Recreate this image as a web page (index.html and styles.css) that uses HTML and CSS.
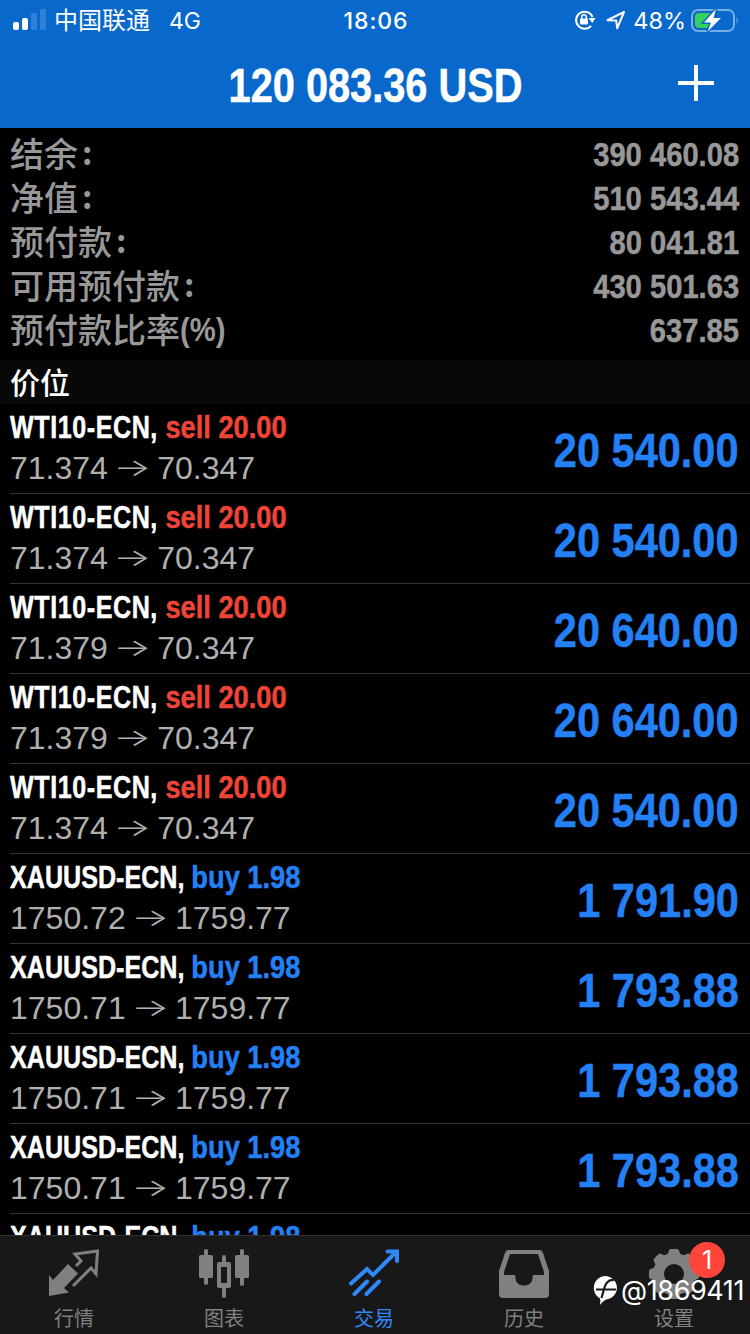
FILE: index.html
```html
<!DOCTYPE html>
<html lang="zh-CN">
<head>
    <meta charset="UTF-8">
    <meta name="viewport" content="width=device-width, initial-scale=1.0">
    <title>交易</title>
    <link rel="stylesheet" href="styles.css">
</head>
<body>

    <div class="app">
        <header class="header">
            <div class="status-bar">
                <div class="status-left">
                    <svg class="signal" width="34" height="22" viewBox="0 0 34 22">
                        <rect x="1" y="13" width="6" height="8" rx="2" fill="#fff"/>
                        <rect x="10" y="9" width="6" height="12" rx="2" fill="#fff"/>
                        <rect x="19" y="4" width="6" height="17" rx="1" fill="#2e80d8"/>
                        <rect x="28" y="0" width="6" height="21" rx="1" fill="#2e80d8"/>
                    </svg>
                    <span class="carrier">中国联通</span>
                    <span class="network">4G</span>
                </div>
                <div class="clock">18:06</div>
                <div class="status-right">
                    <svg class="lock" width="22" height="22" viewBox="0 0 22 22">
                        <path d="M18.5 8A8.5 8.5 0 1 0 17 16.8" fill="none" stroke="#fff" stroke-width="2"/>
                        <path d="M14.5 9h7l-3.2 5z" fill="#fff"/>
                        <rect x="6" y="9.5" width="8" height="6" rx="1" fill="#fff"/>
                        <path d="M7.7 10V8a2.3 2.3 0 0 1 4.6 0v2" fill="none" stroke="#fff" stroke-width="1.5"/>
                    </svg>
                    <svg class="location" width="20" height="20" viewBox="0 0 20 20">
                        <path d="M1.5 10.2L18 2 11.2 18.3 10.2 10.4z" fill="none" stroke="#fff" stroke-width="2" stroke-linejoin="round"/>
                    </svg>
                    <span class="percent">48%</span>
                    <svg class="battery" width="50" height="26" viewBox="0 0 50 26">
                        <rect x="2" y="3" width="42" height="21" rx="6" fill="none" stroke="#78ade2" stroke-width="2"/>
                        <path d="M46.5 10q2.5 3 0 7z" fill="#78ade2"/>
                        <path d="M9 6h11v15H9a4 4 0 0 1-4-4v-7a4 4 0 0 1 4-4z" fill="#35cf5c"/>
                        <path d="M26 2L14 15.5h7L17.5 24.5 31 11h-7.5z" fill="#fff" stroke="#0868cc" stroke-width="3" paint-order="stroke"/>
                    </svg>
                </div>
            </div>
            <div class="title-bar">
                <h1 class="title">120 083.36 USD</h1>
                <svg class="add" width="36" height="36" viewBox="0 0 36 36">
                    <path d="M18 0v36M0 18h36" stroke="#fff" stroke-width="4"/>
                </svg>
            </div>
        </header>

        <section class="summary">
            <div class="summary-row"><span class="label">结余<i>:</i></span><span class="value">390 460.08</span></div>
            <div class="summary-row"><span class="label">净值<i>:</i></span><span class="value">510 543.44</span></div>
            <div class="summary-row"><span class="label">预付款<i>:</i></span><span class="value">80 041.81</span></div>
            <div class="summary-row"><span class="label">可用预付款<i>:</i></span><span class="value">430 501.63</span></div>
            <div class="summary-row"><span class="label">预付款比率<b>(%)</b></span><span class="value">637.85</span></div>
        </section>

        <h2 class="section-title">价位</h2>

        <main class="positions">
            <div class="position">
                <div>
                    <div class="symbol wti">WTI10-ECN, <span class="sell">sell 20.00</span></div>
                    <div class="prices">71.374 <span class="arrow">→</span> 70.347</div>
                </div>
                <div class="profit">20 540.00</div>
            </div>
            <div class="position">
                <div>
                    <div class="symbol wti">WTI10-ECN, <span class="sell">sell 20.00</span></div>
                    <div class="prices">71.374 <span class="arrow">→</span> 70.347</div>
                </div>
                <div class="profit">20 540.00</div>
            </div>
            <div class="position">
                <div>
                    <div class="symbol wti">WTI10-ECN, <span class="sell">sell 20.00</span></div>
                    <div class="prices">71.379 <span class="arrow">→</span> 70.347</div>
                </div>
                <div class="profit">20 640.00</div>
            </div>
            <div class="position">
                <div>
                    <div class="symbol wti">WTI10-ECN, <span class="sell">sell 20.00</span></div>
                    <div class="prices">71.379 <span class="arrow">→</span> 70.347</div>
                </div>
                <div class="profit">20 640.00</div>
            </div>
            <div class="position">
                <div>
                    <div class="symbol wti">WTI10-ECN, <span class="sell">sell 20.00</span></div>
                    <div class="prices">71.374 <span class="arrow">→</span> 70.347</div>
                </div>
                <div class="profit">20 540.00</div>
            </div>
            <div class="position">
                <div>
                    <div class="symbol">XAUUSD-ECN, <span class="buy">buy 1.98</span></div>
                    <div class="prices">1750.72 <span class="arrow">→</span> 1759.77</div>
                </div>
                <div class="profit">1 791.90</div>
            </div>
            <div class="position">
                <div>
                    <div class="symbol">XAUUSD-ECN, <span class="buy">buy 1.98</span></div>
                    <div class="prices">1750.71 <span class="arrow">→</span> 1759.77</div>
                </div>
                <div class="profit">1 793.88</div>
            </div>
            <div class="position">
                <div>
                    <div class="symbol">XAUUSD-ECN, <span class="buy">buy 1.98</span></div>
                    <div class="prices">1750.71 <span class="arrow">→</span> 1759.77</div>
                </div>
                <div class="profit">1 793.88</div>
            </div>
            <div class="position">
                <div>
                    <div class="symbol">XAUUSD-ECN, <span class="buy">buy 1.98</span></div>
                    <div class="prices">1750.71 <span class="arrow">→</span> 1759.77</div>
                </div>
                <div class="profit">1 793.88</div>
            </div>
            <div class="position">
                <div>
                    <div class="symbol">XAUUSD-ECN, <span class="buy">buy 1.98</span></div>
                </div>
            </div>
        </main>

        <nav class="tab-bar">
            <div class="tab">
                <svg width="50" height="50" viewBox="0 0 50 50">
                    <path d="M0 26l4 5L19 15l10 9.5L15 39l5 4.500L0 47z" fill="currentColor"/>
                    <path d="M27 17l5-5L26 5l22.500-3L47 25l-5-6L24 37" fill="none" stroke="currentColor" stroke-width="3"/>
                </svg>
                <span>行情</span>
            </div>
            <div class="tab">
                <svg width="50" height="50" viewBox="0 0 50 50" fill="currentColor">
                    <rect x="0" y="6" width="14" height="23" rx="1.5"/>
                    <rect x="5" y="0" width="4" height="36" rx="2"/>
                    <rect x="36" y="6" width="14" height="23" rx="1.5"/>
                    <rect x="41" y="0" width="4" height="37" rx="2"/>
                    <path d="M20 13h10a2 2 0 0 1 2 2v22a2 2 0 0 1-2 2H20a2 2 0 0 1-2-2V15a2 2 0 0 1 2-2zM22 18v16h6V18z" fill-rule="evenodd"/>
                    <rect x="23" y="6" width="4" height="10" rx="2"/>
                    <rect x="23" y="36" width="4" height="13" rx="2"/>
                </svg>
                <span>图表</span>
            </div>
            <div class="tab active">
                <svg width="50" height="50" viewBox="0 0 50 50">
                    <path d="M2 34.5L18 20l6 6L47 3M38.5 2.5H48V12M18 32.5L5.5 45M30 32.5L17.5 45" fill="none" stroke="currentColor" stroke-width="4" stroke-linecap="round"/>
                </svg>
                <span>交易</span>
            </div>
            <div class="tab">
                <svg width="50" height="50" viewBox="0 0 50 50">
                    <path d="M10 1h30q3 0 4 3l6 18v23q0 4-4 4H4q-4 0-4-4V22L6 4q1-3 4-3zM11 5L5 23v3h10q1.5 0 1.5 3c0 10 17 10 17 0q0-3 1.5-3h10v-3L39 5z" fill="currentColor" fill-rule="evenodd"/>
                </svg>
                <span>历史</span>
            </div>
            <div class="tab">
                <svg width="50" height="50" viewBox="0 0 50 50">
                    <g fill="currentColor">
                        <path d="M25 4a21 21 0 1 0 0 42 21 21 0 0 0 0-42zM25 15a10 10 0 1 1 0 20 10 10 0 0 1 0-20z" fill-rule="evenodd"/>
                        <path id="cog" d="M17.5 8L20 1.5Q20.5 0 22 0h6q1.5 0 2 1.5L32.5 8zM17.5 42L20 48.5q.5 1.5 2 1.5h6q1.5 0 2-1.5L32.5 42z"/>
                        <use href="#cog" transform="rotate(45 25 25)"/>
                        <use href="#cog" transform="rotate(90 25 25)"/>
                        <use href="#cog" transform="rotate(135 25 25)"/>
                    </g>
                </svg>
                <span>设置</span>
                <em class="badge">1</em>
            </div>
        </nav>

        <div class="watermark">
            <svg width="26" height="30" viewBox="0 0 26 30">
                <path d="M13 0a12.5 11.8 0 0 1 1 23.5Q11 25 8 29q1-4 0-6.5A12 12 0 0 1 13 0z" fill="#fff"/>
                <path d="M22 4C16 3.5 13.5 7 12 13L9.5 22M4 13.5h20" fill="none" stroke="#1a1a1a" stroke-width="2.2"/>
            </svg>
            <span>@1869411</span>
        </div>
    </div>

</body>
</html>
```

FILE: styles.css
```css
body {
    margin: 0;
    background-color: #000;
    color: #fff;
    font-family: "Liberation Sans", "Noto Sans CJK SC", sans-serif;
}
.app {
    position: relative;
    display: flex;
    flex-direction: column;
    width: 750px;
    height: 1334px;
    overflow: hidden;
}
.header {
    flex: none;
    height: 128px;
    background-color: #0868cc;
}
.status-bar {
    display: grid;
    grid-template-columns: 1fr auto 1fr;
    align-items: center;
    height: 40px;
    padding: 0 10px 0 12px;
    font-family: Inter, "Noto Sans CJK SC", sans-serif;
    font-size: 24px;
}
.status-left, .status-right {
    display: flex;
    align-items: center;
}
.status-right {
    justify-content: flex-end;
}
.carrier {
    margin: -3px 0 0 8px;
}
.network {
    margin: 1px 0 0 19px;
    font-size: 23px;
}
.clock {
    margin-top: 1px;
    font-size: 23px;
    font-weight: 500;
    letter-spacing: 0.9px;
}
.lock {
    margin-right: 10px;
}
.location {
    margin-right: 7px;
}
.percent {
    margin-top: 1px;
    font-size: 23.5px;
}
.battery {
    margin-left: 4px;
}
.title-bar {
    display: grid;
    grid-template-columns: 1fr auto 1fr;
    align-items: center;
    height: 86px;
    padding: 0 36px;
}
/* condensed bold face */
.title, .label b, .value, .symbol, .profit {
    font-family: "Liberation Sans", sans-serif;
    font-weight: bold;
    -webkit-text-stroke: 0.5px;
}
.title {
    grid-column: 2;
    margin: 6px 0 0;
    font-size: 48px;
    line-height: 80px;
    transform: scaleX(0.828);
}
.add {
    justify-self: end;
}
.summary {
    flex: none;
    height: 228px;
    padding: 4px 11px 0 10px;
    color: #989898;
}
.summary-row {
    display: flex;
    justify-content: space-between;
    height: 44px;
    line-height: 44px;
}
.label {
    font-family: "Noto Sans CJK SC", sans-serif;
    font-size: 34px;
    font-weight: 500;
    line-height: 42px;
}
.label i {
    display: inline-block;
    margin-left: 4px;
    font-size: 32px;
    font-style: normal;
    font-weight: bold;
    line-height: 1;
    vertical-align: 2px;
}
.label b {
    display: inline-block;
    line-height: 1;
    transform: scaleX(0.86);
    transform-origin: left;
    vertical-align: 2px;
    -webkit-text-stroke: 0;
}
.value {
    font-size: 34px;
    transform: scaleX(0.858);
    transform-origin: right;
}
.section-title {
    flex: none;
    box-sizing: border-box;
    height: 44px;
    margin: 0;
    padding-left: 10px;
    background-color: #080808;
    font-family: "Noto Sans CJK SC", sans-serif;
    font-size: 30px;
    font-weight: 500;
    line-height: 42px;
}
.positions {
    flex: 1;
    min-height: 0;
    overflow: hidden;
}
.position {
    display: flex;
    justify-content: space-between;
    box-sizing: border-box;
    height: 90px;
    margin-left: 10px;
    padding: 3px 11px 0 0;
    border-bottom: 1px solid #333;
}
.symbol {
    height: 41px;
    font-size: 32px;
    line-height: 41px;
    white-space: nowrap;
    transform: scaleX(0.785);
    transform-origin: left;
}
.symbol.wti {
    letter-spacing: 0.7px;
}
.prices {
    color: #b0b0b0;
    font-size: 32px;
    line-height: 41px;
}
.arrow {
    display: inline-block;
    margin-right: 1px;
    font-family: Inter, sans-serif;
    font-weight: 300;
    line-height: 1;
    transform: scale(1.25, 0.75);
}
.sell, .buy {
    display: inline-block;
    letter-spacing: 0;
    transform: scaleX(1.085);
    transform-origin: left;
}
.sell {
    color: #ee4538;
}
.buy, .profit {
    color: #2480f5;
}
.profit {
    font-size: 48px;
    line-height: 88px;
    transform: scaleX(0.865);
    transform-origin: right;
}
.tab-bar {
    flex: none;
    display: flex;
    box-sizing: border-box;
    height: 99px;
    border-top: 1px solid #333;
    background-color: #181818;
    color: #808080;
}
.tab {
    position: relative;
    display: flex;
    flex-direction: column;
    align-items: center;
    width: 148px;
    padding: 13px 2px 0 0;
    font-family: "Noto Sans CJK SC", sans-serif;
    font-size: 20px;
    line-height: 38px;
}
.tab svg {
    flex: none;
}
.tab.active {
    color: #3088f8;
}
.badge {
    position: absolute;
    top: 6px;
    right: 25px;
    width: 36px;
    height: 36px;
    border-radius: 50%;
    background-color: #ff453a;
    color: #fff;
    font-family: Inter, sans-serif;
    font-size: 25px;
    font-style: normal;
    line-height: 36px;
    text-align: center;
}
.watermark {
    position: absolute;
    right: 6px;
    bottom: 25px;
    display: flex;
    align-items: center;
    gap: 3px;
    font-family: Inter, sans-serif;
    font-size: 27px;
    letter-spacing: -0.4px;
    line-height: 36px;
}
```
